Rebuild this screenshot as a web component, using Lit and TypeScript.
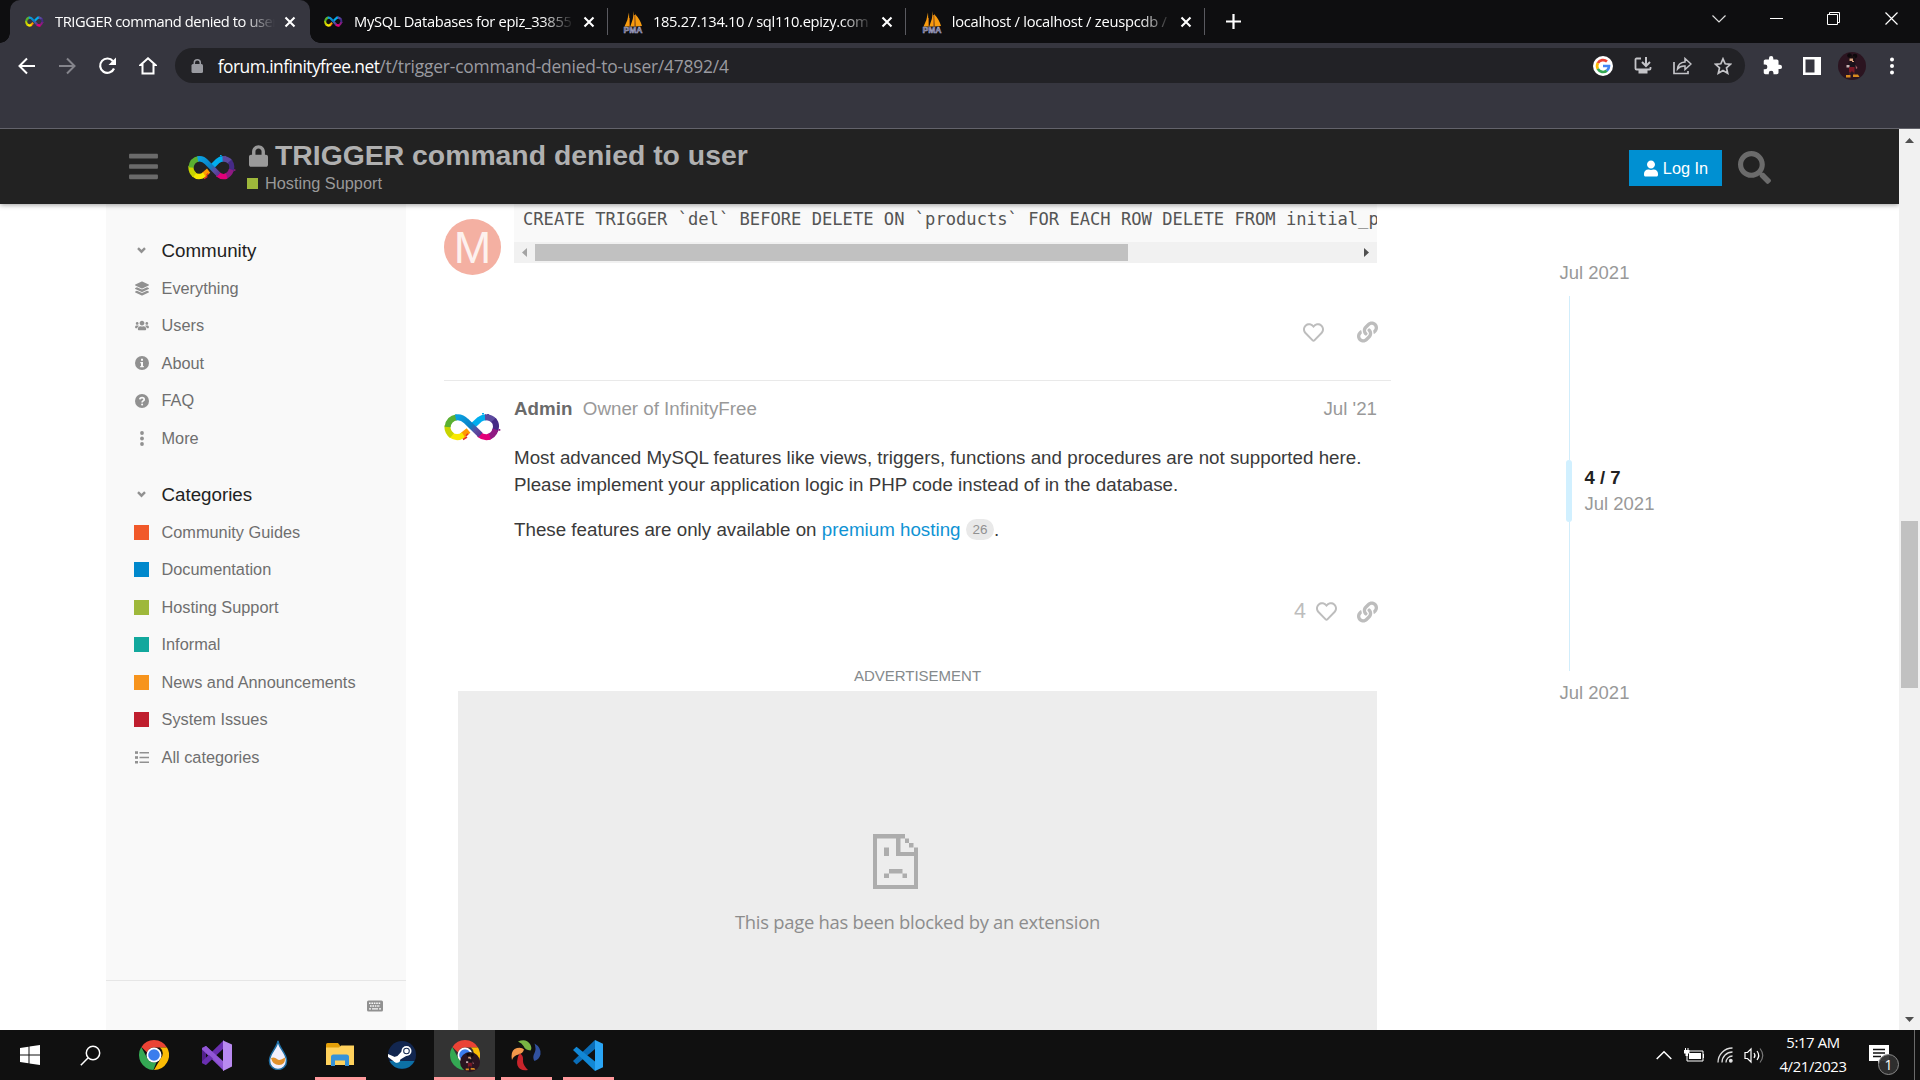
import { LitElement, html, css, svg } from "lit";
import { customElement } from "lit/decorators.js";

const P: Record<string, [number, number, string]> = {
  bars: [448, 512, "M16 132h416c8.8 0 16-7.2 16-16V76c0-8.8-7.2-16-16-16H16C7.200 60 0 67.200 0 76v40c0 8.800 7.200 16 16 16zm0 160h416c8.800 0 16-7.200 16-16v-40c0-8.800-7.200-16-16-16H16c-8.800 0-16 7.200-16 16v40c0 8.800 7.200 16 16 16zm0 160h416c8.800 0 16-7.200 16-16v-40c0-8.800-7.200-16-16-16H16c-8.800 0-16 7.200-16 16v40c0 8.800 7.200 16 16 16z"],
  search: [512, 512, "M505 442.7L405.3 343c-4.5-4.5-10.6-7-17-7H372c27.6-35.3 44-79.7 44-128C416 93.1 322.9 0 208 0S0 93.1 0 208s93.1 208 208 208c48.3 0 92.7-16.4 128-44v16.3c0 6.4 2.5 12.5 7 17l99.7 99.7c9.4 9.4 24.6 9.4 33.9 0l28.3-28.3c9.4-9.4 9.4-24.6.1-34zM208 336c-70.7 0-128-57.2-128-128 0-70.7 57.2-128 128-128 70.7 0 128 57.2 128 128 0 70.7-57.2 128-128 128z"],
  user: [448, 512, "M224 256c70.7 0 128-57.3 128-128S294.7 0 224 0 96 57.3 96 128s57.3 128 128 128zm89.6 32h-16.7c-22.2 10.2-46.9 16-72.9 16s-50.6-5.8-72.9-16h-16.7C60.2 288 0 348.2 0 422.4V464c0 26.5 21.5 48 48 48h352c26.5 0 48-21.5 48-48v-41.6c0-74.2-60.2-134.4-134.4-134.4z"],
  lock: [448, 512, "M400 224h-24v-72C376 68.2 307.8 0 224 0S72 68.2 72 152v72H48c-26.5 0-48 21.5-48 48v192c0 26.5 21.5 48 48 48h352c26.5 0 48-21.5 48-48V272c0-26.5-21.5-48-48-48zm-104 0H152v-72c0-39.7 32.3-72 72-72s72 32.3 72 72v72z"],
  heart: [512, 512, "M458.4 64.3C400.6 15.7 311.3 23 256 79.3 200.7 23 111.4 15.6 53.6 64.3-21.6 127.6-10.6 230.8 43 285.5l175.4 178.7c10 10.2 23.4 15.9 37.6 15.9 14.3 0 27.6-5.6 37.6-15.8L469 285.6c53.5-54.7 64.7-157.9-10.6-221.3zm-23.6 187.5L259.4 430.5c-2.4 2.4-4.4 2.4-6.8 0L77.2 251.8c-36.5-37.2-43.9-107.6 7.3-150.7 38.9-32.7 98.9-27.8 136.5 10.5l35 35.7 35-35.7c37.8-38.5 97.8-43.2 136.5-10.6 51.1 43.1 43.5 113.9 7.3 150.8z"],
  link: [512, 512, "M326.612 185.391c59.747 59.809 58.927 155.698.36 214.59-.11.12-.24.25-.36.37l-67.2 67.2c-59.27 59.27-155.699 59.262-214.96 0-59.27-59.26-59.27-155.7 0-214.96l37.106-37.106c9.84-9.84 26.786-3.3 27.294 10.606.648 17.722 3.826 35.527 9.69 52.721 1.986 5.822.567 12.262-3.783 16.612l-13.087 13.087c-28.026 28.026-28.905 73.66-1.155 101.96 28.024 28.579 74.086 28.749 102.325.51l67.2-67.19c28.191-28.191 28.073-73.757 0-101.83-3.701-3.694-7.429-6.564-10.341-8.569a16.037 16.037 0 0 1-6.947-12.606c-.396-10.567 3.348-21.456 11.698-29.806l21.054-21.055c5.521-5.521 14.182-6.199 20.584-1.731a152.482 152.482 0 0 1 20.522 17.197zM467.547 44.449c-59.261-59.262-155.69-59.27-214.96 0l-67.2 67.2c-.12.12-.25.25-.36.37-58.566 58.892-59.387 154.781.36 214.59a152.454 152.454 0 0 0 20.521 17.196c6.402 4.468 15.064 3.789 20.584-1.731l21.054-21.055c8.35-8.35 12.094-19.239 11.698-29.806a16.037 16.037 0 0 0-6.947-12.606c-2.912-2.005-6.64-4.875-10.341-8.569-28.073-28.073-28.191-73.639 0-101.83l67.2-67.19c28.239-28.239 74.3-28.069 102.325.51 27.75 28.3 26.872 73.934-1.155 101.96l-13.087 13.087c-4.35 4.35-5.769 10.79-3.783 16.612 5.864 17.194 9.042 34.999 9.69 52.721.509 13.906 17.454 20.446 27.294 10.606l37.106-37.106c59.271-59.259 59.271-155.699.001-214.959z"],
  layers: [512, 512, "M12.41 148.02l232.94 105.67c6.8 3.09 14.49 3.09 21.29 0l232.94-105.67c16.55-7.51 16.55-32.52 0-40.03L266.65 2.31a25.607 25.607 0 0 0-21.29 0L12.41 107.98c-16.55 7.51-16.55 32.53 0 40.04zm487.18 88.28l-58.09-26.33-161.64 73.27c-7.56 3.43-15.59 5.17-23.86 5.17s-16.29-1.74-23.86-5.17L70.51 209.97l-58.1 26.33c-16.55 7.5-16.55 32.5 0 40l232.94 105.59c6.8 3.08 14.49 3.08 21.29 0L499.59 276.3c16.55-7.5 16.55-32.5 0-40zm0 127.8l-57.87-26.23-161.86 73.37c-7.56 3.43-15.59 5.17-23.86 5.17s-16.29-1.74-23.86-5.17L70.29 337.87 12.41 364.1c-16.55 7.5-16.55 32.5 0 40l232.94 105.59c6.8 3.08 14.49 3.08 21.29 0L499.59 404.1c16.55-7.5 16.55-32.5 0-40z"],
  users: [640, 512, "M96 224c35.3 0 64-28.7 64-64s-28.7-64-64-64-64 28.7-64 64 28.7 64 64 64zm448 0c35.3 0 64-28.7 64-64s-28.7-64-64-64-64 28.7-64 64 28.7 64 64 64zm32 32h-64c-17.6 0-33.5 7.1-45.1 18.6 40.3 22.1 68.9 62 75.1 109.4h66c17.7 0 32-14.3 32-32v-32c0-35.3-28.7-64-64-64zm-256 0c61.9 0 112-50.1 112-112S381.9 32 320 32 208 82.1 208 144s50.1 112 112 112zm76.8 32h-8.3c-20.8 10-43.9 16-68.5 16s-47.6-6-68.5-16h-8.3C179.6 288 128 339.6 128 403.2V432c0 26.5 21.5 48 48 48h288c26.5 0 48-21.5 48-48v-28.8c0-63.6-51.600-115.2-115.2-115.2zm-223.7-13.4C161.5 263.1 145.6 256 128 256H64c-35.3 0-64 28.700-64 64v32c0 17.7 14.3 32 32 32h65.900c6.300-47.400 34.900-87.300 75.200-109.400z"],
  puzzle: [24, 24, "M20.500 11H19V7c0-1.100-.9-2-2-2h-4V3.500a2.500 2.500 0 0 0-5 0V5H4c-1.100 0-2 .9-2 2v3.800h1.500a2.700 2.700 0 0 1 0 5.400H2V20c0 1.100.9 2 2 2h3.800v-1.500a2.700 2.700 0 0 1 5.400 0V22H17c1.100 0 2-.9 2-2v-4h1.500a2.500 2.500 0 0 0 0-5z"],
};
const fa = (name: string, w: number, h: number) =>
  html`<svg width=${w} height=${h} viewBox="0 0 ${P[name][0]} ${P[name][1]}" fill="currentColor"><path d=${P[name][2]}></path></svg>`;
const box = (w: number, h: number, body: unknown) =>
  html`<svg width=${w} height=${h} viewBox="0 0 ${w} ${h}" fill="none">${body}</svg>`;

/* Infinity logo: a band of coloured strokes, the blue diagonal on top. */
const infinity = (w: number, h: number) => html`
  <svg width=${w} height=${h} viewBox="0 0 57 28" fill="none" stroke-width="6" preserveAspectRatio="none">
    <defs>
      <linearGradient id="dg" gradientUnits="userSpaceOnUse" x1="14" y1="4" x2="38" y2="24">
        <stop offset="0" stop-color="#0aa0e0"></stop><stop offset=".5" stop-color="#0a7fc4"></stop>
        <stop offset=".7" stop-color="#5a4fa2"></stop><stop offset="1" stop-color="#5b2d90"></stop>
      </linearGradient>
    </defs>
    <path stroke="#ff9a00" d="M18 22.800L24.500 17.500"></path>
    <path stroke="#00aeef" d="M29 12.500L35.500 6.500Q38 4.500 42 4.200"></path>
    <path stroke="#f9e900" d="M6.500 21.500Q12.500 26.500 19.500 22"></path>
    <path stroke="#c8d400" d="M3.500 12.500Q2.800 18.500 8 22.700"></path>
    <path stroke="#5ab031" d="M3.600 14Q4.500 5.500 13 4.200"></path>
    <path stroke="#5c4a9e" d="M41 4.200Q47 4 50.500 8.200"></path>
    <path stroke="#452a86" d="M49.500 7Q53.600 11.500 51 18"></path>
    <path stroke="#8f1a82" d="M51.600 16.500Q49.500 22.500 44 24"></path>
    <path stroke="#e2007a" d="M46 23.600Q40 25.500 35 21.500"></path>
    <path stroke="url(#dg)" d="M11.500 4.400Q17.500 3.200 22 8L36.500 22"></path>
    <path stroke="#e6332a" stroke-width="1.600" d="M19 26.500l4-2.500M22 22.800l2-2"></path>
    <g stroke="none"><rect x="38" y="0" width="2" height="1.500" fill="#00aeef"></rect><rect x="43" y="1" width="2" height="2" fill="#5c4a9e"></rect>
    <rect x="54.500" y="16" width="1.800" height="1.800" fill="#8f1a82"></rect></g>
  </svg>`;

const pma = html`<svg width="20" height="24" viewBox="0 0 20 24">
  <path fill="#f89c0e" d="M6 2.500L6.500 16.500H1.500Q5 10 6 2.500zM11 1V16.500H7.300Q10.500 9 11 1zM12 4Q17 9 19 16L12.500 16.500z"></path>
  <path fill="#b9691a" d="M11 5v11.500h1.200V5zM6 8v8.500h.8V8z"></path>
  <text x="10" y="23" text-anchor="middle" font-family="Liberation Sans" font-weight="700" font-size="9" textLength="19" lengthAdjust="spacingAndGlyphs" fill="#55557a" stroke="#b9b9d6" stroke-width=".5">PMA</text>
</svg>`;

const mickey = (s: number) => html`<svg width=${s} height=${s} viewBox="0 0 28 28">
  <circle cx="14" cy="14" r="14" fill="#2b1420"></circle>
  <circle cx="11.500" cy="3.500" r="2.300" fill="#0d090c"></circle><circle cx="17" cy="4" r="2.300" fill="#0d090c"></circle>
  <circle cx="14.200" cy="7" r="3.300" fill="#1a0f12"></circle>
  <path d="M11.500 6.500h3.500v2.500h-3.500zM14 9h2v1h-2z" fill="#d9a27f"></path>
  <path d="M10.500 10.500h7v5h-7z" fill="#19131b"></path><path d="M8.500 13h3v2.500h-3z" fill="#c9b2b5"></path>
  <path d="M11 15h5.500v5.500h-1.500l-1-2-1 2h-2z" fill="#7c1826"></path>
  <path d="M17.500 13l2 3-1.500 1z" fill="#a8666c"></path>
  <path d="M11 20.500h1.500v2.500H11zM15.500 20.500H17v2.500h-1.500z" fill="#402030"></path>
  <path d="M8 23h4.500v2.500H8zM15 22.500h5l1.500 2.500h-6.500z" fill="#d98a1f"></path>
</svg>`;

const chrome = html`<svg width="30" height="30" viewBox="0 0 48 48">
  <path fill="#ea4335" d="M24 0a24 24 0 0 1 20.800 12H24a12 12 0 0 0-11.200 7.800L4 11A24 24 0 0 1 24 0z"></path>
  <path fill="#fbbc05" d="M44.800 12A24 24 0 0 1 24 48l10.400-18A12 12 0 0 0 33.500 12z"></path>
  <path fill="#34a853" d="M3.700 11.200L13.600 30A12 12 0 0 0 28 35.300L23 48A24 24 0 0 1 3.700 11.200z"></path>
  <circle cx="24" cy="24" r="12" fill="#fff"></circle><circle cx="24" cy="24" r="9.300" fill="#3b7ded"></circle></svg>`;

const vsIcon = html`<svg width="31" height="31" viewBox="0 0 31 31">
  <path fill="#52218a" d="M1 8l4-2v19l-4-2z"></path>
  <path fill="#8a4fd0" d="M5 6l18 18.500L23 31 1 9.500V8z"></path>
  <path fill="#6a2fb0" d="M1 21.500L23 0v8L5 25l-4-2z"></path>
  <path fill="#9257d6" d="M5 6l18 16v6L1 9z"></path>
  <path fill="#b98af0" d="M22 .5l9 4v22l-9 4.500z"></path></svg>`;
const codeIcon = html`<svg width="30" height="31" viewBox="0 0 30 31">
  <path fill="#0a6db8" d="M0 21L22 0v9L3.500 24.500z"></path>
  <path fill="#1288d6" d="M0 10l3.500-3.200L22 21.500V31z"></path>
  <path fill="#2aa5f5" d="M22 0l8 3.800v23.400L22 31z"></path></svg>`;

const winLogo = box(20, 20, svg`<path fill="#fff" d="M0 3l8.500-1.300v7.800H0zM9.500 1.500L20 0v9.500H9.500zM0 10.500h8.500v7.800L0 17zM9.500 10.500H20V20L9.500 18.500z"></path>`);
const winSearch = box(21, 21, svg`<circle cx="13" cy="8" r="6.700" stroke="#fff" stroke-width="1.500"></circle><path d="M8.200 12.800L.8 20.200" stroke="#fff" stroke-width="1.500"></path>`);
const drop = box(20, 30, svg`<path d="M10 1C11.500 9 19 14 18.500 21a8.500 8.500 0 0 1-17 0C1 14 8.500 9 10 1z" fill="#f2effc" stroke="#1f6fa5" stroke-width="1.500"></path><path d="M3 18q3.500-1.500 6 1t8-1.500q.5 7.500-6 7.500T3 18z" fill="#e0902b"></path>`);
const folder = box(28, 24, svg`<path d="M0 1.500Q0 0 1.500 0H12l2 2.500V5H0z" fill="#e39f08"></path><path d="M0 4.500h13l2-2h13V22H0z" fill="#ffd15c"></path><path d="M5 14q0-2.500 2.500-2.500h13Q23 11.500 23 14v9h-4v-5.500h-10V23H5z" fill="#3692d8"></path>`);
const steam = box(28, 28, svg`<circle cx="14" cy="14" r="14" fill="#12264f"></circle><path d="M1.500 20a14 14 0 0 0 25 0z" fill="#0d70a5"></path><path d="M0 13l8 3.500 7-7.500 4 5.500-7.500 4.500q-2 4-5.500 1.500L0 16z" fill="#fff"></path><circle cx="18.500" cy="10" r="5" fill="#fff"></circle><circle cx="18.500" cy="10" r="3.300" fill="#12264f"></circle><circle cx="18.500" cy="10" r="2.300" fill="#fff"></circle><circle cx="9" cy="18.500" r="3.200" fill="#fff"></circle>`);
const swirl = box(31, 31, svg`<path d="M7 1.500Q15-2 19 4q2.500 4 .5 6.500Q14 10 12.500 6 11 3 7 1.500z" fill="#79b544"></path><path d="M23.500 3.500q7 4 6 11-1.500 5-6 6.500-2.500-3.500 0-8 2-4 0-9.500z" fill="#31519f"></path><path d="M1 20Q-1 10 6 8q5-1 7 1.500-1 4-5.500 5Q2.500 15.500 1 20z" fill="#f3994b"></path><path d="M8.500 13.500q4 1.500 3.500 6.500-.5 5 5 10Q9 31.500 6.500 25.500 5 19 8.500 13.500z" fill="#c8242b"></path>`);

const chev = box(9, 7, svg`<path d="M1 1.200l3.500 3.500L8 1.200" stroke="#919191" stroke-width="2.400"></path>`);
const info = box(14, 14, svg`<circle cx="7" cy="7" r="7" fill="#919191"></circle><path d="M6 2.800h2v2H6zM5.300 6H8v4h.8v1.200H5.200V10H6V7.200h-.7z" fill="#f9f9f9"></path>`);
const question = box(14, 14, svg`<circle cx="7" cy="7" r="7" fill="#919191"></circle><path d="M4.800 5.400C5 3 9.200 3 9.200 5.400c0 1.500-2.100 1.500-2.100 3" stroke="#f9f9f9" stroke-width="1.700"></path><circle cx="7.100" cy="10.500" r="1" fill="#f9f9f9"></circle>`);
const dotsV = box(4, 15, svg`<g fill="#919191"><circle cx="2" cy="2" r="1.900"></circle><circle cx="2" cy="7.500" r="1.900"></circle><circle cx="2" cy="13" r="1.900"></circle></g>`);
const list = box(14, 13, svg`<path d="M0 1.700h3M4.500 1.700H14M0 6.500h3M4.500 6.500H14M0 11.300h3M4.500 11.300H14" stroke="#919191" stroke-width="1.600"></path><path d="M0 1.500h3M0 6.500h3M0 11.300h3" stroke="#919191" stroke-width="2.600"></path>`);
const keyboard = box(16, 12, svg`<rect y=".5" width="16" height="11" rx="1.500" fill="#919191"></rect><path d="M2 3.300h12M3 6h10" stroke="#f9f9f9" stroke-width="1.500" stroke-dasharray="1.600 .8"></path><path d="M2 8.800h2M5 8.800h6M12 8.800h2" stroke="#f9f9f9" stroke-width="1.300"></path>`);
const closeX = box(12, 12, svg`<path d="M1.500 1.500l9 9M10.500 1.500l-9 9" stroke="#fff" stroke-width="2.100"></path>`);

const tabs: [string, boolean, string][] = [
  ["TRIGGER command denied to user", true, "t1"],
  ["MySQL Databases for epiz_33855", true, "t2"],
  ["185.27.134.10 / sql110.epizy.com", false, "t3"],
  ["localhost / localhost / zeuspcdb /", false, "t4"],
];
const community: [unknown, string][] = [
  [fa("layers", 14, 15), "Everything"], [fa("users", 14, 11), "Users"], [info, "About"], [question, "FAQ"], [dotsV, "More"],
];
const categories = [
  ["#f1592a", "Community Guides"], ["#0088cc", "Documentation"], ["#9eb83b", "Hosting Support"],
  ["#12a89d", "Informal"], ["#f7941d", "News and Announcements"], ["#bf1e2e", "System Issues"],
];

@customElement("app-root")
export class AppRoot extends LitElement {
  static styles = css`
    :host { display: flex; flex-direction: column; width: 1920px; height: 1080px; overflow: hidden; background: #fff; font-family: "Liberation Sans", Arial, sans-serif; font-size: 18.75px; color: #222; }
    * { box-sizing: border-box; }
    svg { display: block; flex: none; }
    .ui { font-family: "Open Sans", "Noto Sans", sans-serif; }
    .strip { height: 43px; flex: none; background: #0e0e10; display: flex; padding-left: 10px; }
    .tab { width: 298.8px; flex: none; display: flex; align-items: center; padding-left: 14.300px; color: #fff; position: relative; }
    .tab.on { width: 300px; margin-right: -1.200px; padding-left: 14px; background: #36363f; border-radius: 10px 10px 0 0; }
    .tab.on::before, .tab.on::after { content: ""; position: absolute; bottom: 0; width: 10px; height: 10px; }
    .tab.on::before { left: -10px; background: radial-gradient(circle at 0 0, transparent 9.500px, #36363f 10px); }
    .tab.on::after { right: -10px; background: radial-gradient(circle at 100% 0, transparent 9.500px, #36363f 10px); }
    .tab.sep { border-right: 1px solid #5a5a60; border-image: linear-gradient(transparent 9px, #5a5a60 9px, #5a5a60 34px, transparent 34px) 1; }
    .fav { width: 20px; display: flex; justify-content: center; margin-right: 11px; }
    .fav.p { margin-left: 1.500px; margin-right: 9.500px; }
    .ttl { width: 220px; overflow: hidden; white-space: nowrap; font-size: 14.700px; line-height: 22px; height: 23px; mask-image: linear-gradient(90deg, #000 188px, transparent 220px); margin-right: 8.500px; }
    .t1 { letter-spacing: -.43px; } .t2 { letter-spacing: -.31px; } .t3 { letter-spacing: -.33px; } .t4 { letter-spacing: -.25px; }
    .plus { display: flex; align-items: center; padding-left: 21px; flex: 1; }
    .win { display: flex; align-items: center; width: 230px; padding-bottom: 6px; }
    .win > div { width: 57.500px; display: flex; justify-content: center; }
    .tools { height: 86px; flex: none; background: #36363f; border-bottom: 1px solid #63636b; display: flex; padding: 5px 8px 0 7px; align-items: flex-start; }
    .nav { width: 40.200px; height: 35px; display: flex; align-items: center; justify-content: center; }
    .omni { width: 1570px; height: 35px; margin-left: 7px; border-radius: 18px; background: #222226; display: flex; align-items: center; padding: 0 2px 0 16px; }
    .url { font-size: 17.400px; letter-spacing: -.2px; color: #9a9aa0; margin-left: 15px; flex: 1; white-space: nowrap; line-height: 24px; }
    .url b { font-weight: 400; color: #fff; letter-spacing: -.55px; }
    .oi { width: 40px; display: flex; justify-content: center; }
    .ext { display: flex; height: 35px; align-items: center; margin-left: 7.500px; }
    .ext > div { width: 40px; display: flex; justify-content: center; }
    .page { flex: 1; display: flex; min-height: 0; }
    .view { width: 1899px; display: flex; flex-direction: column; overflow: hidden; }
    .hdr { height: 75px; flex: none; background: #222; box-shadow: 0 1px 5px rgba(0,0,0,.38); z-index: 2; position: relative; display: flex; color: #999; padding-left: 129px; }
    .burger { padding-top: 21px; color: #6b6b6b; width: 59px; }
    .hlogo { padding-top: 26px; width: 59px; }
    .htitle { flex: 1; padding-top: 10px; }
    .h1 { display: flex; align-items: center; height: 32px; font-weight: 700; font-size: 28.360px; color: #b0b0b0; gap: 7px; white-space: nowrap; }
    .h1 svg { color: #999; margin-left: 2px; margin-top: 1px; }
    .hc { display: flex; align-items: center; font-size: 16.320px; gap: 7px; height: 23px; margin-top: 1px; }
    .sq11 { width: 11px; height: 11px; background: #9eb83b; }
    .login { width: 93px; height: 36px; margin-top: 21px; background: #0090d2; color: #fff; font-size: 16.320px; display: flex; align-items: center; justify-content: center; gap: 5px; white-space: nowrap; padding-left: 1px; }
    .hs { color: #6b6b6b; padding: 22px 128px 0 16px; }
    .body { flex: 1; display: flex; min-height: 0; padding-left: 106px; }
    .side { width: 300px; background: #f9f9f9; display: flex; flex-direction: column; }
    .menu { flex: 1; padding: 27.500px 0 0 27.500px; }
    .sh, .si { display: flex; align-items: center; height: 37.500px; color: #6f6f6f; font-size: 16.320px; white-space: nowrap; }
    .sh { color: #222; font-size: 18.750px; height: 38px; }
    .sh.two { margin-top: 18.500px; }
    .ic { width: 16px; display: flex; justify-content: center; color: #919191; margin-right: 12px; }
    .sq { width: 15px; height: 15px; margin-right: 1px; }
    .foot { height: 50px; border-top: 1px solid #e6e6e6; display: flex; justify-content: flex-end; padding: 19px 23px 0 0; }
    .topic { width: 948px; margin-left: 38px; display: flex; flex-direction: column; }
    .p1 { height: 177px; display: flex; flex: none; border-bottom: 1px solid #e9e9e9; width: 947px; }
    .av { width: 70px; }
    .m { width: 57px; height: 56px; border-radius: 50%; background: #f4b0a2; color: #fdf1ee; font-size: 45px; line-height: 57px; text-align: center; margin-top: 14.500px; }
    .post { width: 864px; }
    .code { height: 38px; background: #f9f9f9; overflow: hidden; white-space: pre; font-family: "DejaVu Sans Mono", "Liberation Mono", monospace; font-size: 17.140px; line-height: 26px; padding: 2px 0 0 9px; color: #555; width: 863px; }
    .hbar { height: 21px; width: 863px; background: #f1f1f1; display: flex; align-items: center; }
    .hbar .l { width: 21px; display: flex; justify-content: center; }
    .hbar .th { width: 593px; height: 17px; background: #c1c1c1; }
    .hbar .r { flex: 1; display: flex; justify-content: flex-end; padding-right: 8px; }
    .acts { display: flex; justify-content: flex-end; align-items: center; color: #bdbdbd; gap: 33px; height: 24px; }
    .a1 { margin-top: 57px; }
    .p2 { display: flex; height: 272px; flex: none; }
    .p2 .lg { padding-top: 32px; }
    .meta { display: flex; padding-top: 17px; height: 63px; color: #999; line-height: 22px; }
    .meta b { color: #6a6a6a; margin-right: 10.500px; }
    .meta span { flex: 1; }
    .meta i { font-style: normal; padding-right: 1px; }
    .tx { line-height: 27.200px; white-space: nowrap; color: #3a3a3a; margin-bottom: 17.500px; letter-spacing: .008px; }
    .tx a { color: #0f93d4; }
    .cnt { display: inline-block; background: #e9e9e9; color: #919191; border-radius: 11px; font-size: 13.500px; line-height: 21px; height: 21px; width: 28px; text-align: center; margin-left: 5.500px; vertical-align: 1.500px; }
    .a2 { margin-top: 56.500px; gap: 20px; }
    .likes { display: flex; align-items: center; gap: 10px; font-size: 21.500px; }
    .ad { width: 919px; margin-left: 14px; display: flex; flex-direction: column; flex: 1; }
    .adl { font-size: 15px; color: #858a8c; text-align: center; line-height: 20px; padding-top: 13px; height: 38px; }
    .blk { flex: 1; background: #ededed; display: flex; flex-direction: column; align-items: center; padding-top: 143px; color: #8c8c8c; }
    .blk svg { margin-right: 44px; }
    .bt { font-size: 18.400px; letter-spacing: -.27px; margin-top: 19px; white-space: nowrap; line-height: 28px; }
    .tl { margin-left: 167.500px; padding-top: 58px; color: #999; line-height: 22px; font-size: 18.500px; }
    .rail { height: 375px; width: 200px; margin: 12px 0 11px 6.500px; display: flex; flex-direction: column; }
    .ln { width: 1px; background: #d1edfb; margin-left: 3px; }
    .ln.a { height: 164px; } .ln.b { flex: 1; }
    .hd { display: flex; height: 62px; gap: 12.500px; }
    .hd .k { width: 6px; border-radius: 3px; background: #d1f0ff; }
    .hd b { display: block; color: #222; margin: 7px 0 3.500px; }
    .vbar { width: 21px; background: #f1f1f1; display: flex; flex-direction: column; align-items: center; padding: 9px 0 8px; }
    .vt { width: 17px; height: 167px; background: #c1c1c1; margin-top: 378px; margin-bottom: auto; }
    .task { height: 50px; flex: none; background: #101010; display: flex; color: #fff; padding-left: 10px; }
    .tk { width: 62px; display: flex; align-items: center; justify-content: center; position: relative; flex: none; }
    .tk.start { width: 40px; } .tk.find { width: 73px; padding-left: 7px; }
    .tk.u::after { content: ""; position: absolute; bottom: 0; height: 3px; width: 51px; left: 5.500px; background: #ff9a9d; }
    .tk.on { width: 61px; margin-left: 1px; background: #333; } .tk.on::after { width: 100%; left: 0; }
    .tk .mm { position: absolute; left: 26px; top: 22px; }
    .tray { margin-left: auto; display: flex; align-items: center; }
    .g12 { margin-left: 12px; } .g13 { margin-left: 13px; } .snd { margin: 0 2px 0 11px; }
    .clock { width: 92px; text-align: center; font-size: 14.900px; letter-spacing: -.38px; line-height: 23.500px; margin-right: 7px; padding-bottom: 1px; }
    .note { margin-right: 3px; width: 40px; }
    .endl { width: 1px; height: 50px; background: #6a6a6a; margin: 0 5px 0 5px; }
  `;

  renderStrip() {
    return html`<div class="strip ui">
      ${tabs.map(([t, inf, c], i) => html`<div class="tab ${i === 0 ? "on" : "sep"}">
        <div class="fav ${inf ? "" : "p"}">${inf ? infinity(19, 11) : pma}</div>
        <div class="ttl ${c}">${t}</div>${closeX}</div>`)}
      <div class="plus">${box(15, 15, svg`<path d="M7.500 0v15M0 7.500h15" stroke="#fff" stroke-width="2.200"></path>`)}</div>
      <div class="win">
        <div>${box(14, 8, svg`<path d="M.5.5L7 7 13.500.5" stroke="#ddd" stroke-width="1.200"></path>`)}</div>
        <div>${box(13, 1, svg`<rect width="13" height="1" fill="#fff"></rect>`)}</div>
        <div>${box(13, 13, svg`<path d="M.5 2.500h10v10H.5zM2.500 2.500v-2h10v10h-2" stroke="#fff"></path>`)}</div>
        <div>${box(13, 13, svg`<path d="M.5.5l12 12M12.500.5l-12 12" stroke="#fff" stroke-width="1.200"></path>`)}</div>
      </div></div>`;
  }

  renderTools() {
    const s = "#c4c4c8";
    return html`<div class="tools">
      <div class="nav">${box(18, 18, svg`<path d="M17 9H2M9 1.500L1.500 9 9 16.500" stroke="#fff" stroke-width="2"></path>`)}</div>
      <div class="nav">${box(18, 18, svg`<path d="M1 9h15M9 1.500L16.500 9 9 16.500" stroke="#85858c" stroke-width="2"></path>`)}</div>
      <div class="nav">${box(18, 18, svg`<path d="M16 11.500A7.200 7.200 0 1 1 15 4.200" stroke="#fff" stroke-width="2.200"></path><path d="M18 .5v7.500h-7.500z" fill="#fff"></path>`)}</div>
      <div class="nav">${box(18, 18, svg`<path d="M3.500 16.500V8H1.500L9 1.300 16.500 8h-2v8.500z" stroke="#fff" stroke-width="2"></path>`)}</div>
      <div class="omni ui">
        ${box(12, 14, svg`<rect x=".5" y="5" width="11.500" height="9" rx="1.500" fill="#9a9ba1"></rect><path d="M3.300 6V3.800a3 3 0 0 1 6 0V6" stroke="#9a9ba1" stroke-width="1.500"></path>`)}
        <div class="url"><b>forum.infinityfree.net</b>/t/trigger-command-denied-to-user/47892/4</div>
        <div class="oi"><svg width="20" height="20" viewBox="0 0 20 20"><circle cx="10" cy="10" r="10" fill="#fff"></circle>
          <g fill="none" stroke-width="2.700"><path stroke="#ea4335" d="M4.800 7.200A6 6 0 0 1 14 5.600"></path><path stroke="#fbbc05" d="M4.900 7A6 6 0 0 0 4.900 13"></path><path stroke="#34a853" d="M4.800 12.900A6 6 0 0 0 13.900 14.600"></path><path stroke="#4285f4" d="M10 10h6a6 6 0 0 1-2.200 4.700"></path></g></svg></div>
        <div class="oi">${box(18, 17, svg`<path d="M7 1.500H2.500a1 1 0 0 0-1 1v9a1 1 0 0 0 1 1h13a1 1 0 0 0 1-1V10" stroke=${s} stroke-width="1.800"></path><path d="M4.500 13h9v3.500h-9z" fill=${s}></path><path d="M12 0v8M8 5l4 4 4-4" stroke=${s} stroke-width="2"></path>`)}</div>
        <div class="oi">${box(19, 18, svg`<path d="M1 5v11.500h14V14" stroke=${s} stroke-width="1.700"></path><path d="M4.500 12q.5-6.500 7.500-7V1.500l6 5.500-6 5.500V9q-5-.3-7.500 3z" stroke=${s} stroke-width="1.500"></path>`)}</div>
        <div class="oi">${box(18, 18, svg`<path d="M9 1.800l2.200 5 5.300.5-4 3.600 1.200 5.300L9 13.400l-4.700 2.800 1.200-5.300-4-3.600 5.300-.5z" stroke=${s} stroke-width="1.700"></path>`)}</div>
      </div>
      <div class="ext">
        <div>${box(19, 19, svg`<path transform="translate(-1 -.8) scale(.87)" fill="#fff" d=${P.puzzle[2]}></path>`)}</div>
        <div>${box(18, 18, svg`<path fill="#fff" fill-rule="evenodd" d="M0 0h18v18H0zM2.500 2.500v13h9v-13z"></path>`)}</div>
        <div>${mickey(28)}</div>
        <div>${box(4, 18, svg`<g fill="#fff"><circle cx="2" cy="2.500" r="2"></circle><circle cx="2" cy="9" r="2"></circle><circle cx="2" cy="15.500" r="2"></circle></g>`)}</div>
      </div></div>`;
  }

  renderHeader() {
    return html`<div class="hdr">
      <div class="burger"><svg width="29" height="33" viewBox="0 0 448 512" fill="currentColor"><path d=${P.bars[2]}></path></svg></div>
      <div class="hlogo">${infinity(48, 25)}</div>
      <div class="htitle">
        <div class="h1">${fa("lock", 19, 22)}<span>TRIGGER command denied to user</span></div>
        <div class="hc"><div class="sq11"></div>Hosting Support</div>
      </div>
      <div class="login">${fa("user", 14, 17)}Log In</div>
      <div class="hs">${fa("search", 33, 33)}</div>
    </div>`;
  }

  renderSide() {
    return html`<div class="side"><div class="menu">
      <div class="sh"><div class="ic">${chev}</div>Community</div>
      ${community.map(([i, t]) => html`<div class="si"><div class="ic">${i}</div>${t}</div>`)}
      <div class="sh two"><div class="ic">${chev}</div>Categories</div>
      ${categories.map(([c, t]) => html`<div class="si"><div class="ic"><div class="sq" style="background:${c}"></div></div>${t}</div>`)}
      <div class="si"><div class="ic">${list}</div>All categories</div>
    </div><div class="foot">${keyboard}</div></div>`;
  }

  renderTopic() {
    return html`<div class="topic">
      <div class="p1"><div class="av"><div class="m">M</div></div>
        <div class="post">
          <div class="code">CREATE TRIGGER \`del\` BEFORE DELETE ON \`products\` FOR EACH ROW DELETE FROM initial_products</div>
          <div class="hbar"><div class="l">${box(5, 9, svg`<path d="M5 0v9L0 4.500z" fill="#a3a3a3"></path>`)}</div><div class="th"></div>
            <div class="r">${box(5, 9, svg`<path d="M0 0v9l5-4.500z" fill="#505050"></path>`)}</div></div>
          <div class="acts a1">${fa("heart", 21, 21)}${fa("link", 21, 22)}</div>
        </div></div>
      <div class="p2"><div class="av lg">${infinity(57, 28)}</div>
        <div class="post">
          <div class="meta"><b>Admin</b><span>Owner of InfinityFree</span><i>Jul '21</i></div>
          <div class="tx">Most advanced MySQL features like views, triggers, functions and procedures are not supported here.<br>Please implement your application logic in PHP code instead of in the database.</div>
          <div class="tx">These features are only available on <a>premium hosting</a><span class="cnt">26</span>.</div>
          <div class="acts a2"><div class="likes">4${fa("heart", 21, 21)}</div>${fa("link", 21, 22)}</div>
        </div></div>
      <div class="ad"><div class="adl">ADVERTISEMENT</div>
        <div class="blk ui">
          ${box(45, 55, svg`<path fill="#adadad" fill-rule="evenodd" d="M0 0h32v4.500h-4.500V18H41v-4.500h4V55H0zM4 4.500V51h37V22H23V4.500z"></path><path fill="#adadad" d="M32 4.500h4v4.500h-4zM36 9h4.500v4.500H36zM11 13.500h5V22h-5zM16 35h13.500v4.500H16zM11 39.500h5V44h-5zM29.500 39.500H34V44h-4.500z"></path>`)}
          <div class="bt">This page has been blocked by an extension</div>
        </div></div>
    </div>`;
  }

  renderTimeline() {
    return html`<div class="tl"><div>Jul 2021</div>
      <div class="rail"><div class="ln a"></div>
        <div class="hd"><div class="k"></div><div><b>4 / 7</b>Jul 2021</div></div>
        <div class="ln b"></div></div>
      <div>Jul 2021</div></div>`;
  }

  renderTask() {
    const items: [unknown, string][] = [
      [chrome, ""], [vsIcon, ""], [drop, ""], [folder, "u"], [steam, ""],
      [html`${chrome}<div class="mm">${mickey(20)}</div>`, "u on"], [swirl, "u"], [codeIcon, "u"],
    ];
    return html`<div class="task ui">
      <div class="tk start">${winLogo}</div><div class="tk find">${winSearch}</div>
      ${items.map(([i, c]) => html`<div class="tk ${c}">${i}</div>`)}
      <div class="tray">
        ${box(16, 10, svg`<path d="M.7 9L8 1.700 15.300 9" stroke="#fff" stroke-width="1.500"></path>`)}
        <svg class="g12" width="20" height="14" viewBox="0 0 20 14"><path d="M3 3h16v10H3z" fill="none" stroke="#fff"></path><path d="M5 5h12v6H5zM19 6h1v4h-1zM0 2h5.500v3.500H4V8H1.500V5.500H0zM1 0h1v2H1zM3.500 0h1v2h-1z" fill="#fff"></path></svg>
        <svg class="g13" width="16" height="16" viewBox="0 0 16 16" fill="none" stroke="#ddd" stroke-width="1.300"><path d="M1 15.500A14.500 14.500 0 0 1 15.500 1M5 15.500A10.500 10.500 0 0 1 15.500 5M9 15.500A6.500 6.500 0 0 1 15.500 9"></path><circle cx="13.800" cy="13.800" r="1.300" fill="#fff"></circle></svg>
        <svg class="snd" width="21" height="17" viewBox="0 0 21 17" fill="none" stroke="#fff" stroke-width="1.200"><path d="M1 5.500h2.500L7 2v13l-3.500-3.500H1z"></path><path d="M10 6q2 2.500 0 5M13 4q3.500 4.500 0 9"></path><path stroke="#777" d="M16 1.500q5.500 7 0 14"></path></svg>
        <div class="clock">5:17 AM<br>4/21/2023</div>
        <svg class="note" width="34" height="40" viewBox="0 0 34 40"><path fill="#fff" d="M0 10h20v16h-8l-3 3v-3H0z"></path><path d="M4 14.500h12M4 18h12M4 21.500h8" stroke="#111" stroke-width="1.300"></path>
          <circle cx="19.500" cy="29.500" r="10" fill="#303030" fill-opacity=".95" stroke="#8a8a8a"></circle><text x="19.500" y="34.500" text-anchor="middle" fill="#fff" font-size="14" font-family="Open Sans">1</text></svg>
        <div class="endl"></div>
      </div></div>`;
  }

  render() {
    return html`${this.renderStrip()}${this.renderTools()}
      <div class="page"><div class="view">${this.renderHeader()}
        <div class="body">${this.renderSide()}${this.renderTopic()}${this.renderTimeline()}</div></div>
        <div class="vbar">${box(9, 5, svg`<path d="M0 5h9L4.500 0z" fill="#505050"></path>`)}<div class="vt"></div>${box(9, 5, svg`<path d="M0 0h9L4.500 5z" fill="#505050"></path>`)}</div>
      </div>${this.renderTask()}`;
  }
}
